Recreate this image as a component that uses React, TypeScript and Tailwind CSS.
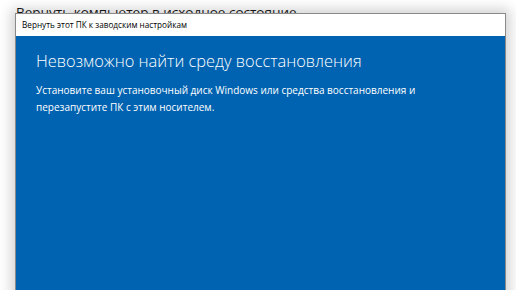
export default function App() {
  return (
    <div className="relative w-[516px] h-[290px] overflow-hidden bg-white" style={{ fontFamily: '"Open Sans", "Noto Sans", sans-serif' }}>
      <div className="pl-[16px] pt-[0px] text-[13.5px] leading-[24px] font-normal text-[#1a1a1a]">
        Вернуть компьютер в исходное состояние
      </div>
      <div className="absolute left-[15px] top-[13px] w-[491px] h-[300px] border border-[#8a8a8a] bg-[#0063b1] shadow-[0_0_12px_4px_rgba(0,0,0,0.18)] flex flex-col">
        <div className="h-[22px] bg-white flex items-center pl-[6px] text-[8.2px] text-black">
          Вернуть этот ПК к заводским настройкам
        </div>
        <div className="pl-[20px] pt-[13px] text-white">
          <div className="text-[16.4px] leading-[24px] font-light">Невозможно найти среду восстановления</div>
          <div className="mt-[9px] text-[10px] leading-[17px] w-[395px]">
            Установите ваш установочный диск Windows или средства восстановления и перезапустите ПК с этим носителем.
          </div>
        </div>
      </div>
    </div>
  );
}
